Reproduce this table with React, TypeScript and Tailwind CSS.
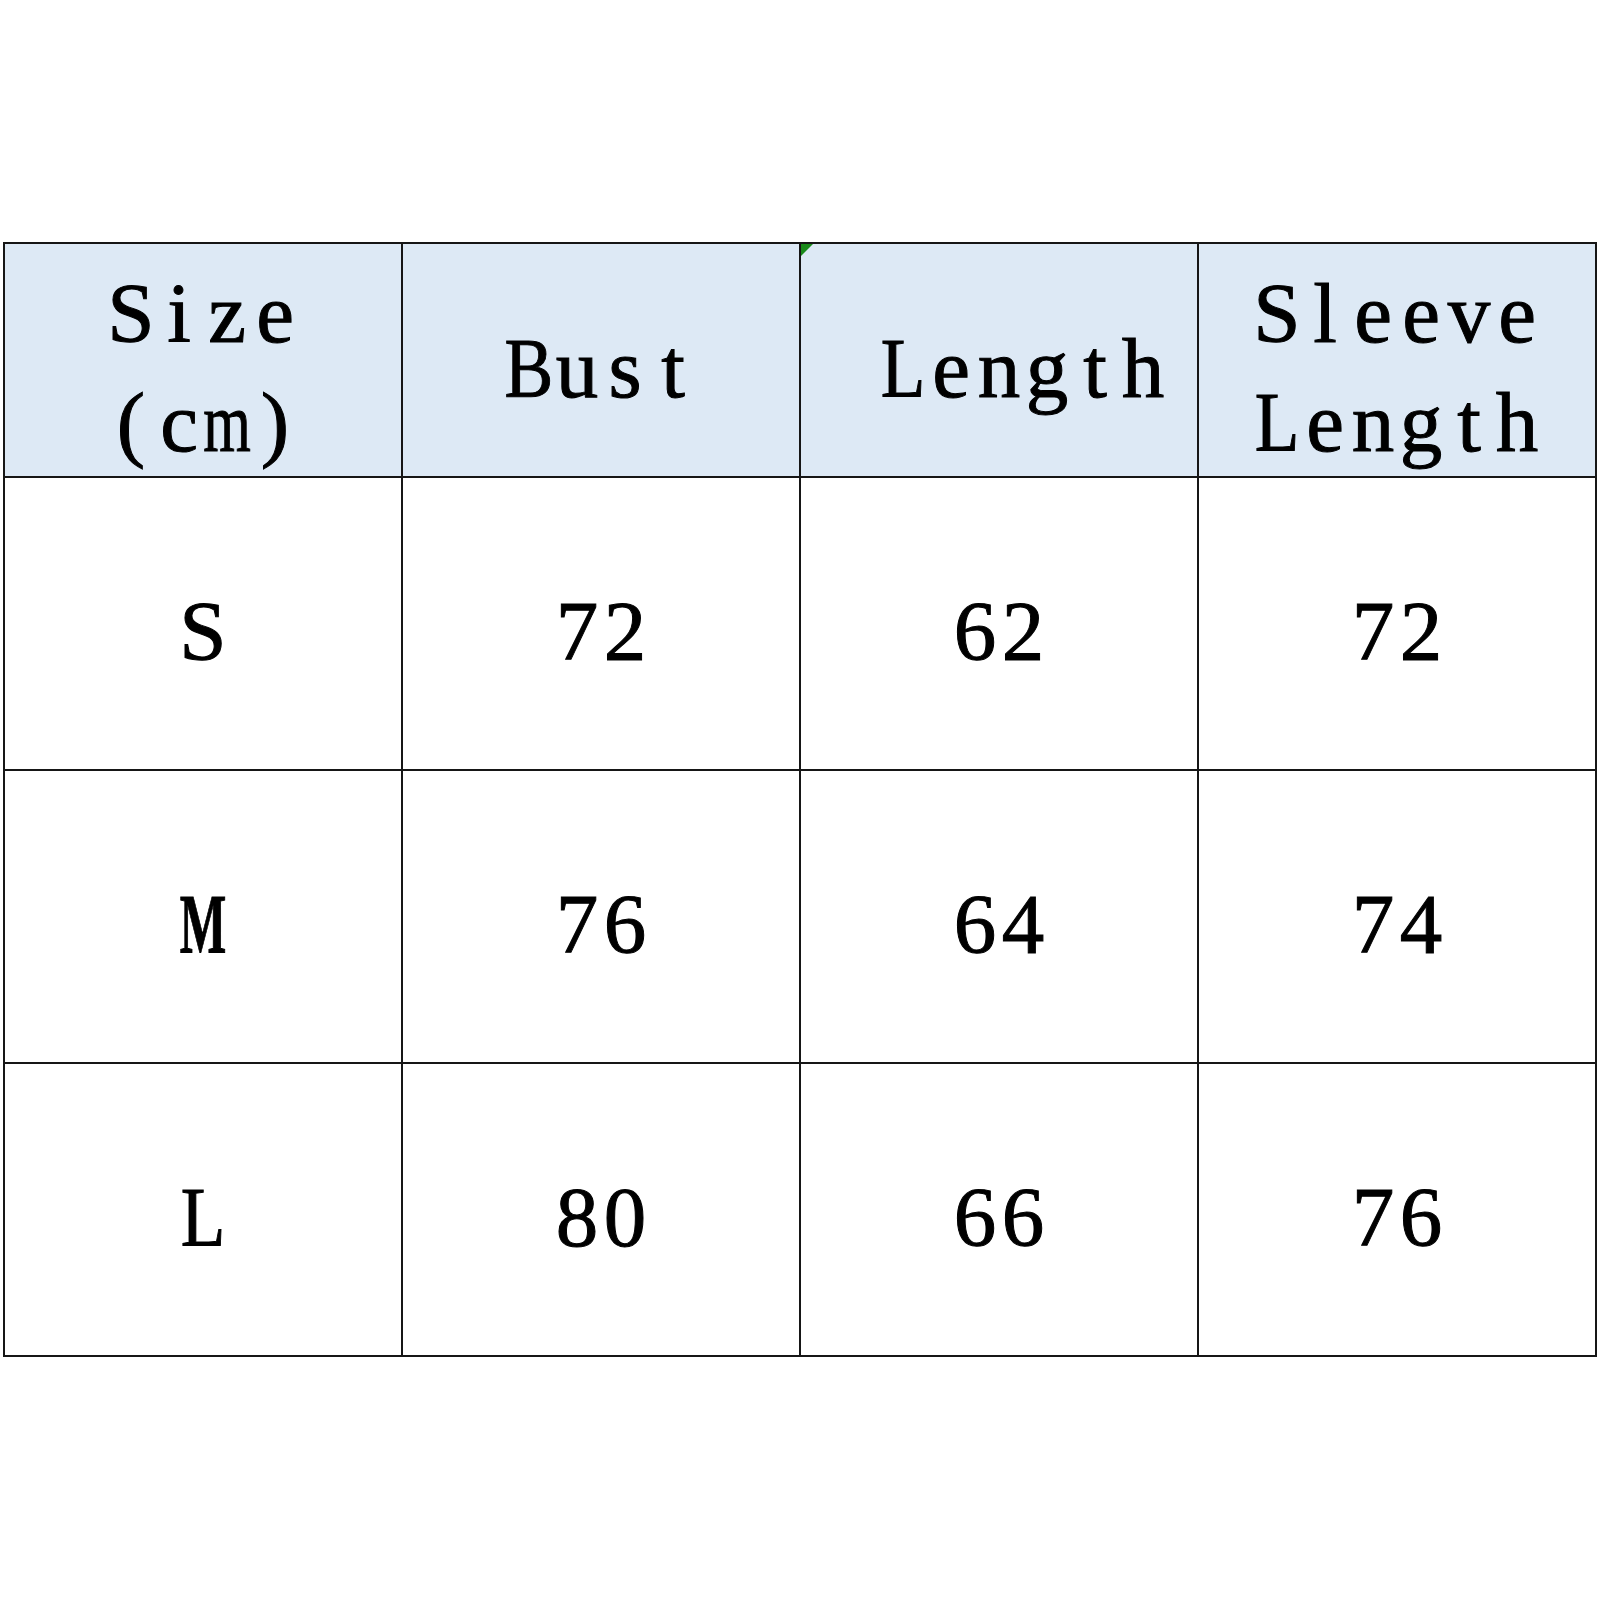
import React from 'react';

// SimSun-like half-width look: every character sits in its own 48px box
const squeeze: Record<string, string> = {
    M: 'scale-x-[0.58] font-bold',
    m: 'scale-x-[0.72]',
    B: 'scale-x-[0.86]',
    L: 'scale-x-[0.86]',
};

function Mono({ text }: { text: string }) {
    return (
        <span className="flex whitespace-nowrap">
            {text.split('').map((ch, i) => (
                <span key={i} className={`inline-flex w-[48px] shrink-0 justify-center ${squeeze[ch] ?? ''}`}>
                    {ch === ' ' ? '\u00a0' : ch}
                </span>
            ))}
        </span>
    );
}

const header = [['Size', '(cm)'], ['Bust'], [' Length'], ['Sleeve', 'Length']];

const rows = [
    ['S', '72', '62', '72'],
    ['M', '76', '64', '74'],
    ['L', '80', '66', '76'],
];

export default function App() {
    return (
        <div className="w-[1600px] h-[1600px] bg-white pt-[242px] pl-[3px]" style={{ fontFamily: '"Liberation Serif", "Times New Roman", serif' }}>
            <div className="grid w-[1594px] grid-cols-[repeat(4,398px)] grid-rows-[234px_293px_293px_293px] border-t-2 border-l-2 border-[#161616] text-[85px] leading-[109px] text-black [-webkit-text-stroke:1px_black]">
                {header.map((lines, i) => (
                    <div key={i} className="relative flex flex-col items-center justify-center border-r-2 border-b-2 border-[#161616] bg-[#dde9f5] pt-4">
                        {i === 2 && (
                            <span className="absolute left-0 top-0 h-0 w-0 border-t-[12px] border-r-[12px] border-t-[#1a8a1a] border-r-transparent" />
                        )}
                        {lines.map((l, j) => (
                            <Mono key={j} text={l} />
                        ))}
                    </div>
                ))}
                {rows.map((r, ri) =>
                    r.map((c, ci) => (
                        <div key={`${ri}-${ci}`} className="flex items-center justify-center border-r-2 border-b-2 border-[#161616] pt-4">
                            <Mono text={c} />
                        </div>
                    ))
                )}
            </div>
        </div>
    );
}
